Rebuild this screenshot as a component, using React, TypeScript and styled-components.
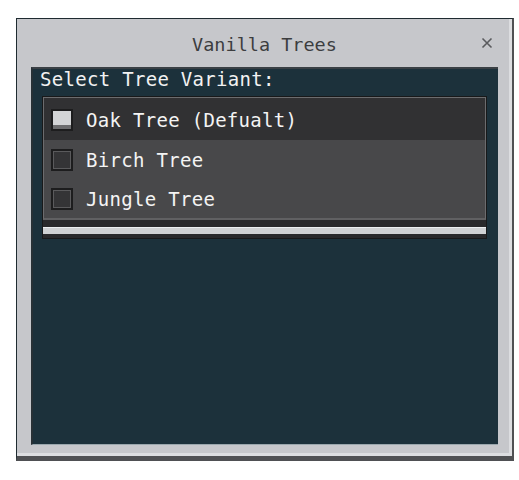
import React, { useState } from "react";
import styled, { createGlobalStyle } from "styled-components";

const GlobalStyle = createGlobalStyle`
  body {
    margin: 0;
    background: #ffffff;
    font-family: "DejaVu Sans Mono", "Liberation Mono", monospace;
  }
`;

const Page = styled.div`
  padding: 18px 0 0 16px;
`;

const Window = styled.div`
  width: 495px;
  height: 437px;
  background: #c6c7cb;
  border-top: 1px solid #1f2b31;
  border-left: 1px solid #1f2b31;
  border-right: 2px solid #4f5053;
  border-bottom: 5px solid #4f5053;
  box-shadow: inset -3px -3px 0 #dcdde0;
  display: flex;
  flex-direction: column;
`;

const Header = styled.div`
  height: 48px;
  display: grid;
  grid-template-columns: 1fr auto 1fr;
  align-items: center;
`;

const Title = styled.div`
  grid-column: 2;
  font-size: 18.5px;
  color: #3c3d3f;
  padding-top: 2px;
`;

const Close = styled.button`
  grid-column: 3;
  justify-self: end;
  margin-right: 19px;
  width: 12px;
  height: 12px;
  padding: 0;
  border: 0;
  background: none;
  display: flex;
  cursor: pointer;
`;

const Panel = styled.div`
  flex: 1;
  margin: 0 14px 11px 14px;
  background: #1c313b;
  border-top: 2px solid #3a4045;
  border-left: 2px solid #283136;
  border-bottom: 1px solid #9aa7ad;
  padding: 0 9px 0 7px;
  display: flex;
  flex-direction: column;
`;

const Label = styled.div`
  color: #f2f2f2;
  font-size: 19px;
  letter-spacing: 0.3px;
  line-height: 20px;
  height: 27px;
`;

const ListBox = styled.div`
  margin: 0 2px 0 2px;
  background: #232325;
  border: 1px solid #18191a;
`;

const Rows = styled.div`
  border: 1px solid #6c6c6e;
  border-bottom-width: 2px;
  border-bottom-color: #606062;
  background: #48484a;
`;

const Row = styled.div<{ $selected: boolean }>`
  height: 39px;
  display: flex;
  align-items: center;
  padding-left: 7px;
  gap: 13px;
  background: ${(p) => (p.$selected ? "#313133" : "#48484a")};
  &:first-child {
    height: 40px;
    padding-top: 2px;
  }
  cursor: pointer;
`;

const Box = styled.div<{ $checked: boolean }>`
  width: 18px;
  height: 18px;
  border: 2px solid #1d1d1e;
  box-sizing: content-box;
  background: ${(p) => (p.$checked ? "#d3d4d6" : "#343436")};
  box-shadow: ${(p) =>
    p.$checked ? "inset 0 -4px 0 #6c6c6e" : "inset 0 0 0 1px #5a5a5c"};
`;

const RowText = styled.span`
  color: #f4f4f4;
  font-size: 19px;
  letter-spacing: 0.3px;
`;

const Track = styled.div`
  padding: 7px 0 4px 0;
  background: #29292b;
`;

const Bar = styled.div`
  height: 6px;
  background: #cfd1d3;
  border-top: 1px solid #eceef0;
`;

const variants = ["Oak Tree (Defualt)", "Birch Tree", "Jungle Tree"];

export default function App() {
  const [selected, setSelected] = useState(0);

  return (
    <>
      <GlobalStyle />
      <Page>
        <Window>
          <Header>
            <Title>Vanilla Trees</Title>
            <Close aria-label="close">
              <svg width="12" height="12" viewBox="0 0 12 12">
                <path d="M1.5 1.5 L10.5 10.5 M10.5 1.5 L1.5 10.5" stroke="#5a5b5e" strokeWidth="1.6" />
              </svg>
            </Close>
          </Header>
          <Panel>
            <Label>Select Tree Variant:</Label>
            <ListBox>
              <Rows>
                {variants.map((v, i) => (
                  <Row key={v} $selected={i === selected} onClick={() => setSelected(i)}>
                    <Box $checked={i === selected} />
                    <RowText>{v}</RowText>
                  </Row>
                ))}
              </Rows>
              <Track>
                <Bar />
              </Track>
            </ListBox>
          </Panel>
        </Window>
      </Page>
    </>
  );
}
